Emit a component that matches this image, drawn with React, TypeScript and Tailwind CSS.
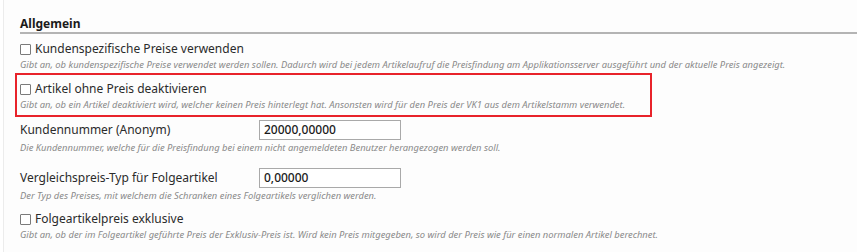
import { ReactNode } from "react";

const font = { fontFamily: '"Noto Sans", "Open Sans", sans-serif' };

function Box() {
  return (
    <span className="inline-block size-[11px] shrink-0 rounded-[1px] border border-[#7a7a7a] bg-white" />
  );
}

function Hint({ children }: { children: ReactNode }) {
  return (
    <div className="mt-[2px] text-[9.4px] italic leading-[12px] text-[#8a8a8a]">
      {children}
    </div>
  );
}

function CheckItem({ label, hint }: { label: string; hint: string }) {
  return (
    <div>
      <label className="flex h-[16px] items-center gap-[4px] text-[12px] text-[#2b2b2b]">
        <Box />
        {label}
      </label>
      <Hint>{hint}</Hint>
    </div>
  );
}

function InputItem({ label, value, hint }: { label: string; value: string; hint: string }) {
  return (
    <div>
      <div className="flex items-center">
        <span className="w-[239px] text-[12px] text-[#2b2b2b]">{label}</span>
        <div className="flex h-[20px] w-[142px] items-center border border-[#a9a9a9] bg-white px-[4px] text-[12px] font-medium text-[#1a1a1a]">
          {value}
        </div>
      </div>
      <Hint>{hint}</Hint>
    </div>
  );
}

export default function App() {
  return (
    <div className="h-[252px] w-[857px] overflow-hidden bg-white" style={font}>
      <div className="ml-[3px] h-full border-l border-[#ececec] bg-[#fdfdfd] pl-[16px]">
        <div className="pt-[17px]">
          <div className="border-b-2 border-[#b4b4b4] pb-[1px] text-[12px] font-bold leading-[14px] text-[#1a1a1a]">
            Allgemein
          </div>
        </div>
        <div className="mt-[7px] flex flex-col">
          <CheckItem
            label="Kundenspezifische Preise verwenden"
            hint="Gibt an, ob kundenspezifische Preise verwendet werden sollen. Dadurch wird bei jedem Artikelaufruf die Preisfindung am Applikationsserver ausgeführt und der aktuelle Preis angezeigt."
          />
          <div className="-ml-[5px] mt-[2px] w-[637px] border-2 border-[#e8232a] pb-[4px] pl-[3px] pt-[6px]">
            <CheckItem
              label="Artikel ohne Preis deaktivieren"
              hint="Gibt an, ob ein Artikel deaktiviert wird, welcher keinen Preis hinterlegt hat. Ansonsten wird für den Preis der VK1 aus dem Artikelstamm verwendet."
            />
          </div>
          <div className="mt-[3px]">
            <InputItem
              label="Kundennummer (Anonym)"
              value="20000,00000"
              hint="Die Kundennummer, welche für die Preisfindung bei einem nicht angemeldeten Benutzer herangezogen werden soll."
            />
          </div>
          <div className="mt-[14px]">
            <InputItem
              label="Vergleichspreis-Typ für Folgeartikel"
              value="0,00000"
              hint="Der Typ des Preises, mit welchem die Schranken eines Folgeartikels verglichen werden."
            />
          </div>
          <div className="mt-[9px]">
            <CheckItem
              label="Folgeartikelpreis exklusive"
              hint="Gibt an, ob der im Folgeartikel geführte Preis der Exklusiv-Preis ist. Wird kein Preis mitgegeben, so wird der Preis wie für einen normalen Artikel berechnet."
            />
          </div>
        </div>
      </div>
    </div>
  );
}
